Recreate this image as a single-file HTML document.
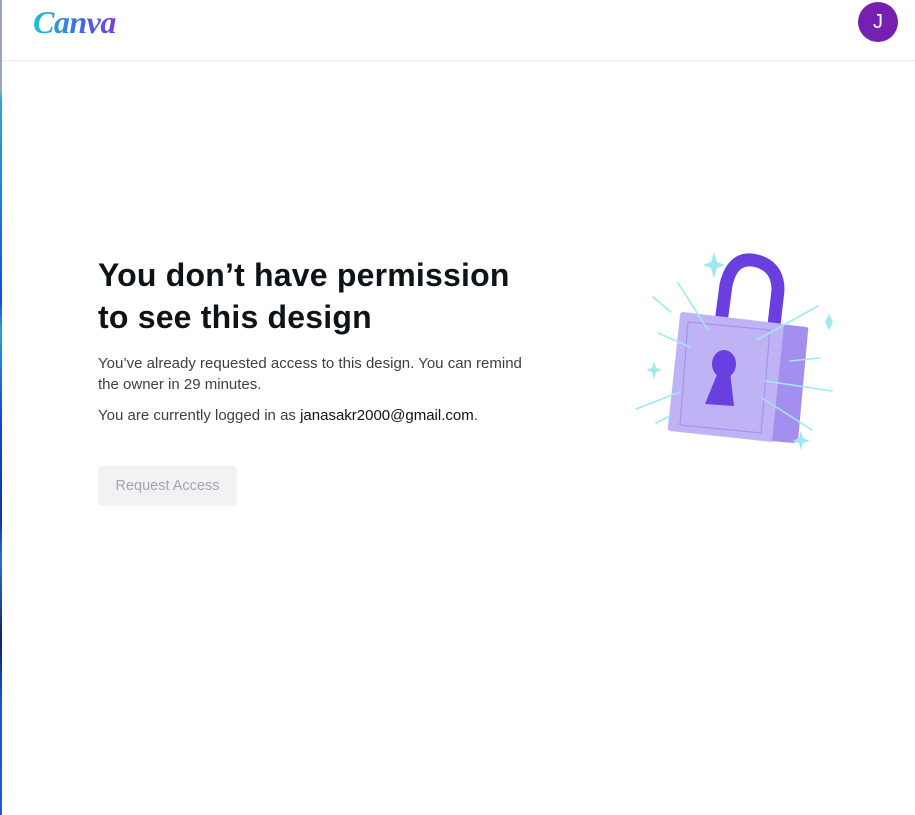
<!DOCTYPE html>
<html><head><meta charset="utf-8"><style>
html,body{margin:0;padding:0;width:915px;height:815px;overflow:hidden;background:#fff;font-family:"Liberation Sans",sans-serif;position:relative}
.strip{position:absolute;left:0;top:0;width:2px;height:815px;background:linear-gradient(#9aa7b8 0,#9aa7b8 90px,#2aa8d8 100px,#1e7fd6 200px,#0c4fd0 300px,#2aa0dc 330px,#1446c8 420px,#1234a0 520px,#2f6fd0 560px,#0f1f70 640px,#1a55c8 700px,#1d5cd0 815px)}
.hdr{position:absolute;left:2px;top:0;right:0;height:60px;border-bottom:1px solid #eceef0;box-shadow:0 1px 2px rgba(0,0,0,0.04)}
.logo{position:absolute;left:31px;top:4px;font-family:"Liberation Serif",serif;font-style:italic;font-weight:bold;font-size:32px;background:linear-gradient(90deg,#1fc1d6,#3b6de0 55%,#7b3fe4);-webkit-background-clip:text;color:transparent;letter-spacing:-0.5px}
.av{position:absolute;left:856px;top:2px;width:40px;height:40px;border-radius:50%;background:#7520b0;color:#fff;font-size:20px;text-align:center;line-height:40px}
h1{position:absolute;left:98px;top:254px;margin:0;font-size:32px;line-height:42px;font-weight:bold;color:#0e1318;letter-spacing:0.2px;white-space:nowrap}
p{position:absolute;left:98px;margin:0;font-size:15px;line-height:21px;color:#3c4047;white-space:nowrap}
.btn{position:absolute;left:98px;top:466px;width:139px;height:40px;border-radius:4px;background:#f1f2f4;color:#a2a6ad;font-size:14.5px;line-height:40px;text-align:center}
</style></head><body>
<div class="strip"></div>
<div class="hdr"><div class="logo">Canva</div><div class="av">J</div></div>
<h1>You don’t have permission<br>to see this design</h1>
<p style="top:353px">You’ve already requested access to this design. You can remind<br>the owner in 29 minutes.</p>
<p style="top:405px">You are currently logged in as <span style="color:#0e1318">janasakr2000@gmail.com</span>.</p>
<div class="btn">Request Access</div>
<svg style="position:absolute;left:0;top:0" width="915" height="815">
<path d="M722 315 L726 285 Q732 258 752 260 Q778 264 778 290 L774 325" fill="none" stroke="#6a3fe0" stroke-width="13" stroke-linecap="round"/>
<path d="M780 324 L806 327 Q809 327 808 331 L798 441 L794 443 L770 441 Z" fill="#a48ef0"/>
<path d="M683 312 L784 324 L772 442 L670 431 Q667 430 668 426 L680 315 Q680 312 683 312 Z" fill="#c0b3f5"/>
<path d="M688 322 L770 330 L761 433 L680 425 Z" fill="none" stroke="#a592ee" stroke-width="1.2"/>
<ellipse cx="724" cy="364" rx="12" ry="14" fill="#6a3fe0"/>
<path d="M718 372 L730 372 L734 406 L705 404 Z" fill="#6a3fe0"/>
<g stroke="#9ee9f0" stroke-width="1.6" stroke-linecap="round">
<line x1="678" y1="283" x2="708" y2="330"/><line x1="653" y1="297" x2="671" y2="312"/>
<line x1="658" y1="333" x2="690" y2="347"/><line x1="818" y1="306" x2="757" y2="340"/>
<line x1="820" y1="358" x2="790" y2="361"/><line x1="832" y1="391" x2="765" y2="381"/>
<line x1="812" y1="430" x2="762" y2="398"/><line x1="636" y1="409" x2="680" y2="392"/>
<line x1="656" y1="423" x2="670" y2="416"/>
</g>
<g fill="#9ee9f0">
<path d="M714 252 L717 262 L725 265 L717 268 L714 278 L711 268 L703 265 L711 262 Z"/>
<path d="M829 314 L833 322 L829 330 L825 322 Z"/>
<path d="M654 361 L656 368 L662 370 L656 372 L654 379 L652 372 L646 370 L652 368 Z"/>
<path d="M801 431 L803 438 L810 441 L803 443 L801 450 L799 443 L792 441 L799 438 Z"/>
</g>
</svg>
</body></html>
